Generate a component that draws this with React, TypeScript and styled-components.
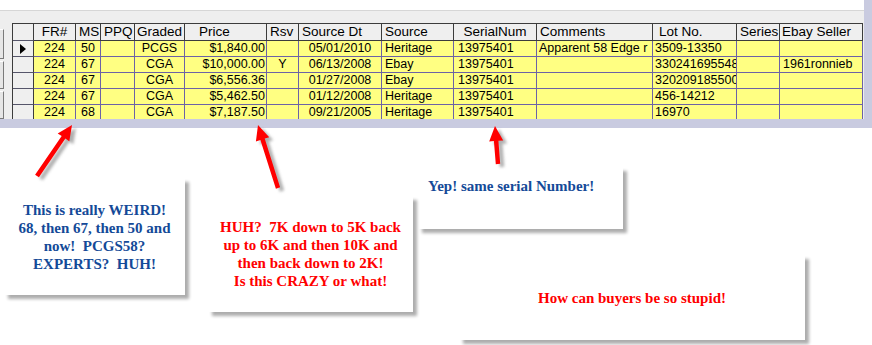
import * as React from "react";
import styled, { createGlobalStyle } from "styled-components";

const GlobalStyle = createGlobalStyle`
  html, body {
    margin: 0;
    padding: 0;
    background: #ffffff;
  }
`;

const lavender = "#c9cbe0";
const headLine = "#3c3c3c";
const dataLine = "#6c62a6";
const calloutBlue = "#144a98";
const calloutRed = "#ff0000";

const Page = styled.div`
  position: relative;
  width: 872px;
  height: 345px;
  overflow: hidden;
  background: #ffffff;
  font-family: "Liberation Sans", Arial, sans-serif;
`;

const Window = styled.div`
  display: flex;
  flex-direction: column;
  height: 128px;
`;

const WindowBody = styled.div`
  display: flex;
  height: 119px;
`;

const Main = styled.div`
  flex: 1;
  display: flex;
  flex-direction: column;
  min-width: 0;
`;

const TopGap = styled.div`
  height: 10px;
  background: #ffffff;
  border-bottom: 1px solid #d6d6d6;
`;

const Panel = styled.div`
  flex: 1;
  display: flex;
  gap: 8px;
  padding-top: 12px;
  background: #eeeeee;
  overflow: hidden;
`;

const SideButtons = styled.div`
  display: flex;
  flex-direction: column;
  gap: 2px;
  padding-top: 6px;
  width: 4px;
`;

const SideButton = styled.div<{ $h: number }>`
  height: ${(p) => p.$h}px;
  background: #e6e6e6;
  border-top: 1px solid #ffffff;
  border-right: 1px solid #7a7a7a;
  border-bottom: 1px solid #7a7a7a;
`;

const RightStrip = styled.div`
  width: 8px;
  background: ${lavender};
`;

const BottomBar = styled.div`
  height: 9px;
  background: ${lavender};
`;

const Grid = styled.div<{ $cols: string }>`
  display: grid;
  grid-template-columns: ${(p) => p.$cols};
  grid-template-rows: 17px repeat(5, 16px);
  align-self: flex-start;
  border-left: 1px solid ${headLine};
  border-top: 1px solid ${headLine};
`;

const HeadCell = styled.div<{ $align: string; $pad: number }>`
  box-sizing: border-box;
  background: #efefef;
  border-right: 1px solid ${headLine};
  border-bottom: 1px solid ${headLine};
  font-size: 13.5px;
  line-height: 16px;
  color: #000;
  text-align: ${(p) => p.$align};
  padding-left: ${(p) => p.$pad}px;
  white-space: nowrap;
  overflow: hidden;
`;

const SelectorCell = styled.div`
  box-sizing: border-box;
  background: #efefef;
  border-right: 1px solid ${headLine};
  border-bottom: 1px solid #55556a;
  display: flex;
  align-items: center;
  padding-left: 7px;
`;

const Pointer = styled.span`
  width: 0;
  height: 0;
  border-top: 5px solid transparent;
  border-bottom: 5px solid transparent;
  border-left: 6px solid #000;
`;

const DataCell = styled.div<{ $align: string; $pad: number }>`
  box-sizing: border-box;
  background: #ffff82;
  border-right: 1px solid ${dataLine};
  border-bottom: 1px solid ${dataLine};
  font-size: 12.5px;
  line-height: 15px;
  color: #000;
  text-align: ${(p) => p.$align};
  padding-left: ${(p) => p.$pad}px;
  padding-right: ${(p) => (p.$align === "right" ? 1 : 0)}px;
  white-space: nowrap;
  overflow: hidden;
  text-overflow: clip;
`;

const Callout = styled.div<{ $x: number; $y: number; $w: number; $h: number; $color: string; $align?: string }>`
  position: absolute;
  left: ${(p) => p.$x}px;
  top: ${(p) => p.$y}px;
  width: ${(p) => p.$w}px;
  height: ${(p) => p.$h}px;
  box-sizing: border-box;
  background: #ffffff;
  box-shadow: 4px 4px 3px rgba(0, 0, 0, 0.32);
  display: flex;
  align-items: center;
  justify-content: ${(p) => (p.$align === "left" ? "flex-start" : "center")};
  text-align: ${(p) => p.$align || "center"};
  font-family: "Liberation Serif", "Times New Roman", serif;
  font-weight: bold;
  font-size: 15px;
  line-height: 18px;
  color: ${(p) => p.$color};
  white-space: pre;
`;

const TopCallout = styled(Callout)`
  align-items: flex-start;
  padding: 10px 0 0 10px;
`;

const ArrowLayer = styled.svg`
  position: absolute;
  left: 0;
  top: 0;
  pointer-events: none;
`;

type Col = { key: string; label: string; w: number; align: string; pad: number; hAlign: string; hPad: number };

const columns: Col[] = [
  { key: "fr", label: "FR#", w: 42, align: "center", pad: 0, hAlign: "center", hPad: 0 },
  { key: "ms", label: "MS", w: 25, align: "center", pad: 0, hAlign: "left", hPad: 3 },
  { key: "ppq", label: "PPQ", w: 34, align: "center", pad: 0, hAlign: "left", hPad: 3 },
  { key: "graded", label: "Graded", w: 50, align: "center", pad: 0, hAlign: "left", hPad: 2 },
  { key: "price", label: "Price", w: 82, align: "right", pad: 0, hAlign: "left", hPad: 14 },
  { key: "rsv", label: "Rsv", w: 32, align: "center", pad: 0, hAlign: "left", hPad: 3 },
  { key: "dt", label: "Source Dt", w: 83, align: "center", pad: 0, hAlign: "left", hPad: 3 },
  { key: "source", label: "Source", w: 72, align: "left", pad: 3, hAlign: "left", hPad: 3 },
  { key: "serial", label: "SerialNum", w: 83, align: "left", pad: 4, hAlign: "center", hPad: 0 },
  { key: "comments", label: "Comments", w: 116, align: "left", pad: 2, hAlign: "left", hPad: 3 },
  { key: "lot", label: "Lot No.", w: 84, align: "left", pad: 2, hAlign: "left", hPad: 6 },
  { key: "series", label: "Series", w: 43, align: "left", pad: 2, hAlign: "left", hPad: 3 },
  { key: "seller", label: "Ebay Seller", w: 83, align: "left", pad: 3, hAlign: "left", hPad: 2 },
];

const rows: Record<string, string>[] = [
  { fr: "224", ms: "50", ppq: "", graded: "PCGS", price: "$1,840.00", rsv: "", dt: "05/01/2010", source: "Heritage", serial: "13975401", comments: "Apparent 58 Edge r", lot: "3509-13350", series: "", seller: "" },
  { fr: "224", ms: "67", ppq: "", graded: "CGA", price: "$10,000.00", rsv: "Y", dt: "06/13/2008", source: "Ebay", serial: "13975401", comments: "", lot: "330241695548", series: "", seller: "1961ronnieb" },
  { fr: "224", ms: "67", ppq: "", graded: "CGA", price: "$6,556.36", rsv: "", dt: "01/27/2008", source: "Ebay", serial: "13975401", comments: "", lot: "320209185500", series: "", seller: "" },
  { fr: "224", ms: "67", ppq: "", graded: "CGA", price: "$5,462.50", rsv: "", dt: "01/12/2008", source: "Heritage", serial: "13975401", comments: "", lot: "456-14212", series: "", seller: "" },
  { fr: "224", ms: "68", ppq: "", graded: "CGA", price: "$7,187.50", rsv: "", dt: "09/21/2005", source: "Heritage", serial: "13975401", comments: "", lot: "16970", series: "", seller: "" },
];

const arrows = [
  { x1: 37, y1: 176, x2: 72, y2: 125 },
  { x1: 278, y1: 188, x2: 258, y2: 125 },
  { x1: 498, y1: 164, x2: 495, y2: 126 },
];

function arrowPoints(x1: number, y1: number, x2: number, y2: number) {
  const w = 4.5;
  const L = 15;
  const H = 14;
  const dx = x2 - x1;
  const dy = y2 - y1;
  const len = Math.hypot(dx, dy);
  const ux = dx / len;
  const uy = dy / len;
  const nx = -uy;
  const ny = ux;
  const bx = x2 - ux * L;
  const by = y2 - uy * L;
  const pts = [
    [x1 + (nx * w) / 2, y1 + (ny * w) / 2],
    [bx + (nx * w) / 2, by + (ny * w) / 2],
    [bx + (nx * H) / 2, by + (ny * H) / 2],
    [x2, y2],
    [bx - (nx * H) / 2, by - (ny * H) / 2],
    [bx - (nx * w) / 2, by - (ny * w) / 2],
    [x1 - (nx * w) / 2, y1 - (ny * w) / 2],
  ];
  return pts.map((p) => `${p[0].toFixed(1)},${p[1].toFixed(1)}`).join(" ");
}

const App = () => {
  const cols = "21px " + columns.map((c) => `${c.w}px`).join(" ");
  return (
    <Page>
      <GlobalStyle />
      <Window>
        <WindowBody>
          <Main>
            <TopGap />
            <Panel>
              <SideButtons>
                <SideButton $h={33} />
                <SideButton $h={32} />
                <SideButton $h={31} />
              </SideButtons>
              <Grid $cols={cols}>
                <SelectorCell />
                {columns.map((c) => (
                  <HeadCell key={c.key} $align={c.hAlign} $pad={c.hPad}>
                    {c.label}
                  </HeadCell>
                ))}
                {rows.map((r, i) => (
                  <React.Fragment key={i}>
                    <SelectorCell>{i === 0 && <Pointer />}</SelectorCell>
                    {columns.map((c) => (
                      <DataCell key={c.key} $align={c.align} $pad={c.pad}>
                        {r[c.key]}
                      </DataCell>
                    ))}
                  </React.Fragment>
                ))}
              </Grid>
            </Panel>
          </Main>
          <RightStrip />
        </WindowBody>
        <BottomBar />
      </Window>

      <Callout $x={4} $y={178} $w={181} $h={117} $color={calloutBlue}>
        {"This is really WEIRD!\n68, then 67, then 50 and\nnow!  PCGS58?\nEXPERTS?  HUH!"}
      </Callout>
      <TopCallout $x={418} $y={167} $w={205} $h={62} $color={calloutBlue} $align="left">
        Yep! same serial Number!
      </TopCallout>
      <Callout $x={208} $y={196} $w={205} $h={116} $color={calloutRed}>
        {"HUH?  7K down to 5K back\nup to 6K and then 10K and\nthen back down to 2K!\nIs this CRAZY or what!"}
      </Callout>
      <Callout $x={459} $y={255} $w={346} $h={85} $color={calloutRed}>
        How can buyers be so stupid!
      </Callout>

      <ArrowLayer width={872} height={345}>
        <defs>
          <filter id="arrowShadow" x="-20%" y="-20%" width="140%" height="140%">
            <feGaussianBlur stdDeviation="1.6" />
          </filter>
        </defs>
        {arrows.map((a, i) => (
          <g key={i}>
            <polygon
              points={arrowPoints(a.x1, a.y1, a.x2, a.y2)}
              fill="#7a7a7a"
              opacity={0.6}
              transform="translate(4 3)"
              filter="url(#arrowShadow)"
            />
            <polygon points={arrowPoints(a.x1, a.y1, a.x2, a.y2)} fill="#ff0000" />
          </g>
        ))}
      </ArrowLayer>
    </Page>
  );
};

export default App;
